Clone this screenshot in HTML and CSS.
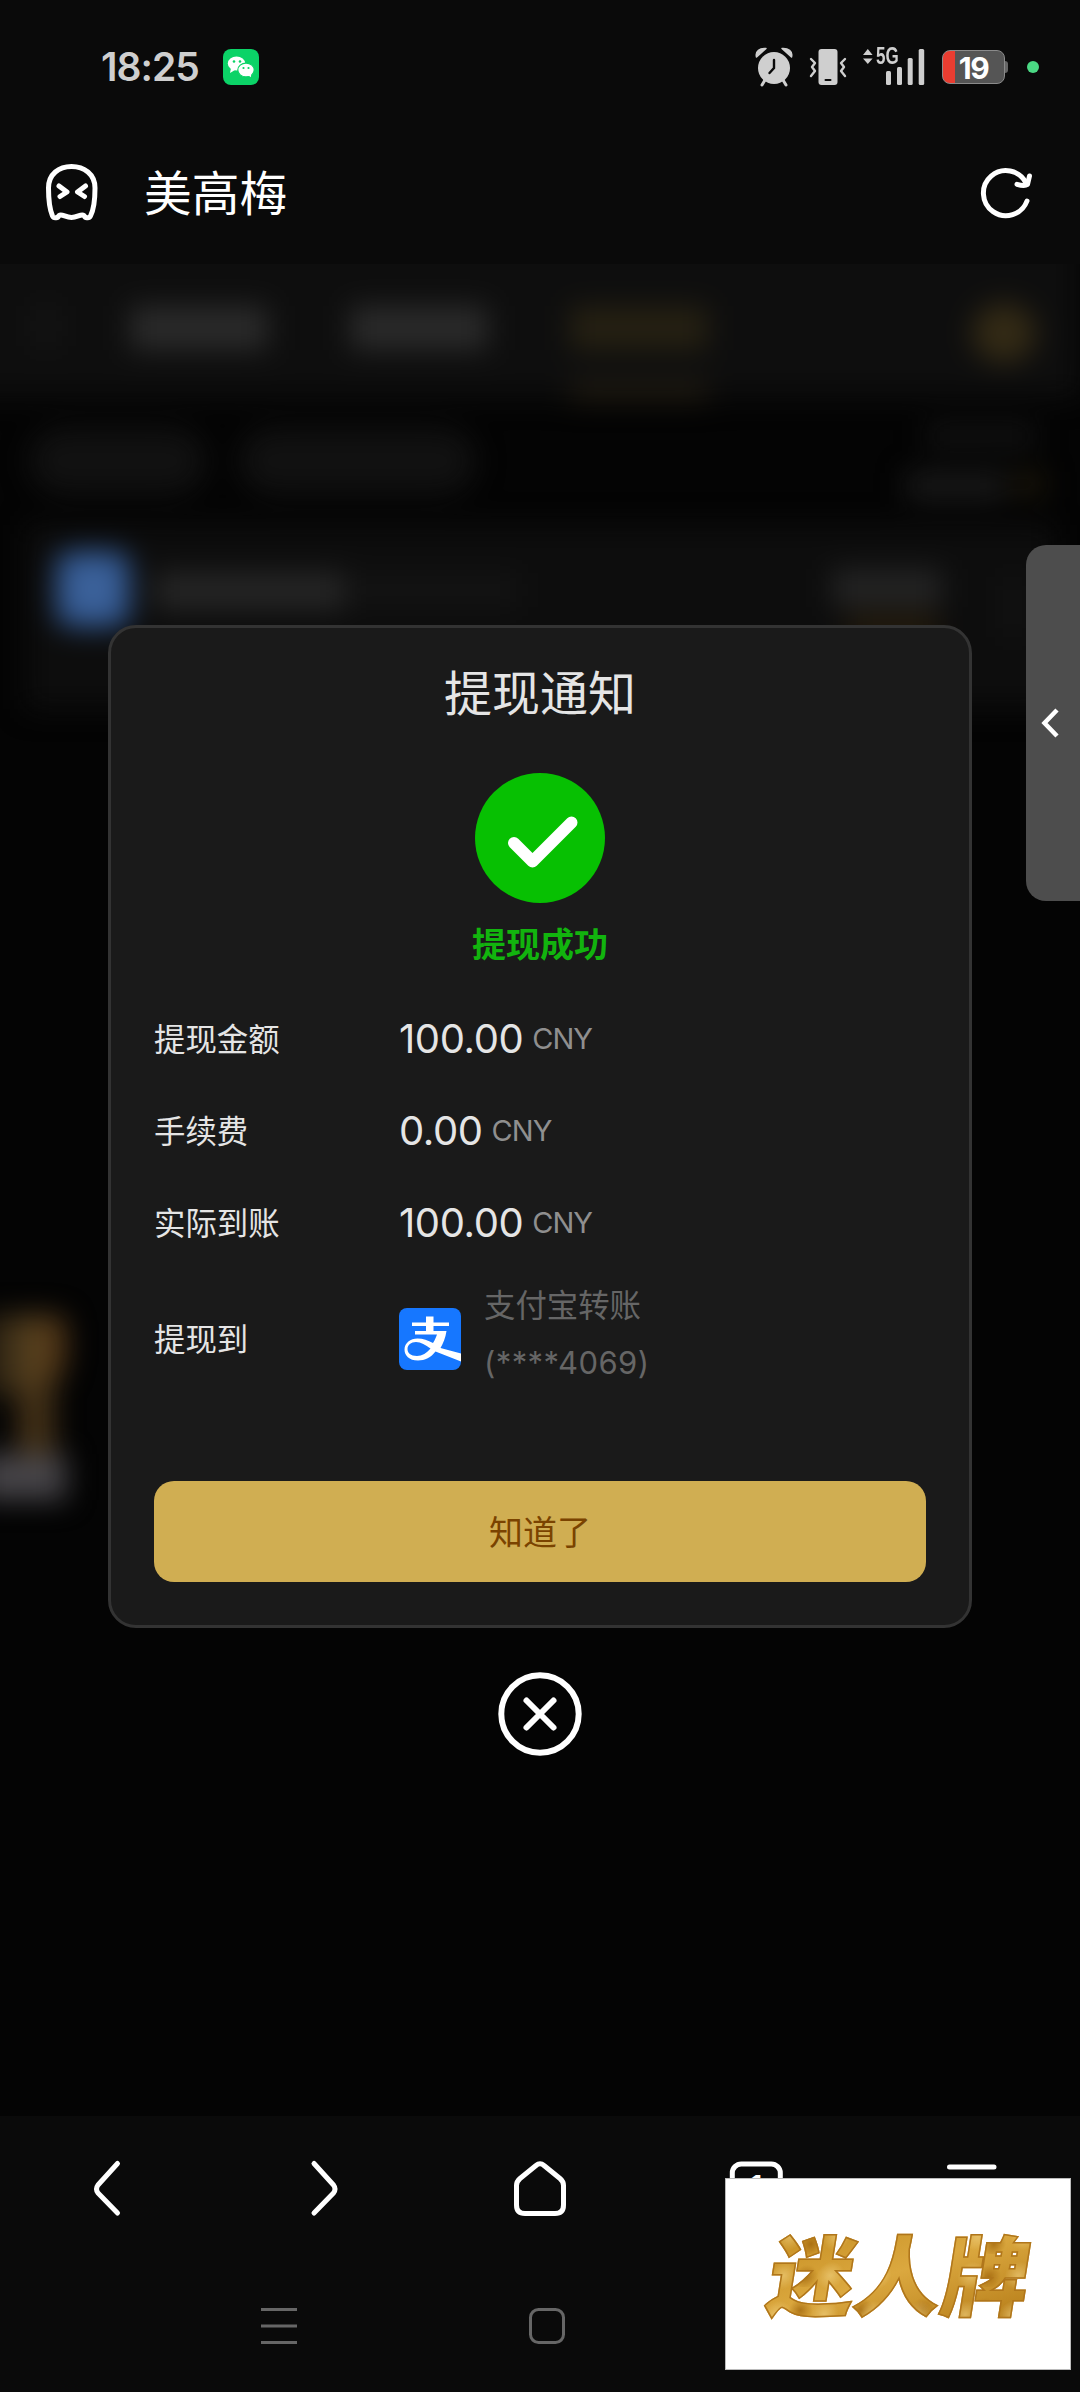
FILE: index.html
```html
<!DOCTYPE html>
<html lang="zh-CN">
<head>
<meta charset="utf-8">
<title>美高梅</title>
<link rel="stylesheet" href="styles.css">
</head>
<body>
<div class="phone">
  <header class="status">
    <span class="clock">18:25</span>
    <svg class="wechat" width="36" height="36" viewBox="0 0 36 36">
      <rect width="36" height="36" rx="8" fill="#0bd367"/>
      <ellipse cx="13.5" cy="14.5" rx="8.7" ry="7" fill="#fff"/><path d="M8 19l-1 5 5-3z" fill="#fff"/>
      <ellipse cx="23" cy="21" rx="8.2" ry="6.9" fill="#fff" stroke="#0bd367" stroke-width="1.2"/><path d="M25 26l3 2.300v-4z" fill="#fff"/>
      <g fill="#0bd367"><circle cx="11" cy="12.500" r="1.300"/><circle cx="17" cy="12.500" r="1.300"/><circle cx="20.500" cy="19" r="1.100"/><circle cx="25.500" cy="19" r="1.100"/></g>
    </svg>
    <div class="signals">
      <svg width="38" height="40" viewBox="0 0 38 40">
        <path d="M1.500 10C0 4 5 1 11 1.500z M36.500 10C38 4 33 1 27 1.500z" fill="#cfcfcf" stroke="#cfcfcf" stroke-width="1.500" stroke-linejoin="round"/>
        <circle cx="19" cy="21" r="16" fill="#cfcfcf"/>
        <path d="M10 33l-3 5M28 33l3 5" stroke="#cfcfcf" stroke-width="3" stroke-linecap="round"/>
        <path d="M19 13v8l-4.500 5" fill="none" stroke="#0a0a0a" stroke-width="2.400" stroke-linecap="round"/>
      </svg>
      <svg class="vibrate" width="38" height="36" viewBox="0 0 38 36">
        <rect x="9.500" width="19" height="36" rx="3" fill="#cfcfcf"/><rect x="15.500" y="30" width="7" height="2" rx="1" fill="#0a0a0a"/>
        <path d="M2 10l4 4-3 4 3 4-4 5M36 10l-4 4 3 4-3 4 4 5" fill="none" stroke="#cfcfcf" stroke-width="2.400" stroke-linecap="round" stroke-linejoin="round"/>
      </svg>
      <div class="cell">
        <svg width="62" height="38" viewBox="0 0 62 38">
          <path d="M0 7l4.800-6 4.800 6zM0 10.500l4.800 5.500 4.800-5.500z" fill="#cfcfcf"/>
          <g fill="#cfcfcf"><rect x="23" y="23" width="5" height="14" rx="1.500"/><rect x="34" y="19" width="5" height="18" rx="1.500"/><rect x="44.700" y="10" width="5" height="27" rx="1.500"/><rect x="55.700" y="1" width="5.500" height="36" rx="1.500"/></g>
        </svg>
        <span class="net">5G</span>
      </div>
      <div class="battery"><span>19</span></div>
      <i class="dot"></i>
    </div>
  </header>

  <div class="appbar">
    <svg width="54" height="58" viewBox="0 0 54 58" fill="none" stroke="#fff" stroke-width="5" stroke-linecap="round" stroke-linejoin="round">
      <path d="M3.500 25C3.500 11 14 3.500 26.500 3.500S50 11 50 25c0 10-1 21-4.500 28-1.500 3-5.500 2-6.500-.5-3-2-6.500 2-12.500 2s-9.500-4-12.500-2c-1 2.500-5 3.500-6.500.5C4.500 46 3.500 35 3.500 25Z"/>
      <path d="M14 23l8 6-7 4.500M40.500 23l-8 6 7 4.500" stroke-width="5"/>
    </svg>
    <h1>美高梅</h1>
    <svg class="reload" width="54" height="54" viewBox="0 0 54 54" fill="none" stroke="#fff" stroke-width="5" stroke-linecap="round" stroke-linejoin="round">
      <path d="M48 36A22.500 22.500 0 1 1 47 18"/><path d="M50.500 11l-2 8.500q-3 2-10.500-.2"/>
    </svg>
  </div>

  <main class="page">
    <div class="behind" aria-hidden="true">
      <div class="tabs">
        <i class="back"></i><i class="tab"></i><i class="tab"></i><i class="tab active"></i><i class="coin"></i>
      </div>
      <div class="filters">
        <i class="pill short"></i><i class="pill"></i>
        <div class="sums"><i></i><i class="wide"></i></div><i class="gold"></i>
      </div>
      <div class="record">
        <i class="logo"></i><i class="name"></i><i class="sub"></i>
        <div class="state"><i></i><i class="orange"></i></div><i class="arrow"></i>
      </div>
      <div class="trophy"><i class="cup"></i><i class="stem"></i><i class="base"></i></div>
    </div>

    <div class="handle">
      <svg width="18" height="30" viewBox="0 0 18 30" fill="none" stroke="#fff" stroke-width="4.500"><path d="M16 2L3.500 15 16 28"/></svg>
    </div>

    <section class="dialog">
      <h2>提现通知</h2>
      <svg class="ok" width="130" height="130" viewBox="0 0 130 130">
        <circle cx="65" cy="65" r="65" fill="#07c002"/>
        <path d="M39 70l18.500 18.500L96.500 49.500" fill="none" stroke="#fff" stroke-width="12" stroke-linecap="round" stroke-linejoin="round"/>
      </svg>
      <p class="result">提现成功</p>
      <dl class="rows">
        <div class="row"><dt>提现金额</dt><dd><b>100.00</b><small>CNY</small></dd></div>
        <div class="row"><dt>手续费</dt><dd><b>0.00</b><small>CNY</small></dd></div>
        <div class="row"><dt>实际到账</dt><dd><b>100.00</b><small>CNY</small></dd></div>
        <div class="row account"><dt>提现到</dt>
          <dd>
            <svg width="62" height="62" viewBox="0 0 62 62">
              <rect width="62" height="62" rx="8" fill="#1677ff"/>
              <path d="M27 8.500h7.500v6H50V18H34.500v5H47.500C46.500 30 44 35.500 41.500 40L62 45.500v8L36.500 43.500C32 49.500 26 52.500 19 52.500 10 52.500 5.500 47.500 5.500 41.500c0-6.500 6-11 13-11 5.500 0 10.500 2 15.500 4.500 2-3 3-6 4-8.500H16v-3.500h11v-5H13v-3.500h14zM31.500 40.500c-5-3.500-9.500-6.500-14.500-6.500-5 0-8.500 3-8.500 7s3 7 9.500 7c5 0 10-3 13.500-7.500z" fill="#fff" fill-rule="evenodd"/>
            </svg>
            <span>支付宝转账<br><em>(****4069)</em></span>
          </dd>
        </div>
      </dl>
      <button class="confirm">知道了</button>
    </section>
    <svg class="close" width="84" height="84" viewBox="0 0 84 84" fill="none" stroke="#fff" stroke-width="6" stroke-linecap="round">
      <circle cx="42" cy="42" r="38.700"/><path d="M28.500 28.500l27 27M55.500 28.500l-27 27"/>
    </svg>
  </main>

  <footer class="bottom">
    <nav class="browser">
      <svg width="54" height="58" viewBox="0 0 54 58"><path d="M36.500 4.500L17 26q-3 4 0 8L36.500 54"/></svg>
      <svg width="54" height="58" viewBox="0 0 54 58"><path d="M17 4.500l19.500 21.500q3 4 0 8L17 54"/></svg>
      <svg width="54" height="58" viewBox="0 0 54 58"><path d="M23 6.500q4-3.500 8 0L47 19.500q3.500 3 3.500 7V46q0 8.500-8.500 8.500H12q-8.500 0-8.500-8.500V26.500q0-4 3.500-7Z"/></svg>
      <div class="windows"><svg width="54" height="58" viewBox="0 0 54 58"><rect x="3.300" y="5" width="48" height="48" rx="9"/></svg><span>1</span></div>
      <svg width="54" height="58" viewBox="0 0 54 58"><path d="M4.500 8H49M4.500 29H49M4.500 49H49"/></svg>
    </nav>
    <nav class="system">
      <svg width="36" height="38" viewBox="0 0 36 38"><path d="M0 2.500h36M0 19h36M0 35.500h36"/></svg>
      <svg width="36" height="38" viewBox="0 0 36 38"><rect x="1.500" y="2.500" width="33" height="33" rx="8"/></svg>
    </nav>
    <div class="stamp"><span>迷人牌</span></div>
  </footer>
</div>
</body>
</html>
```
FILE: styles.css
```css
* { box-sizing: border-box; margin: 0; padding: 0; }
body { background: #040404; font-family: Inter, "Noto Sans CJK SC", sans-serif; color: #e5e5e5; }
svg { display: block; flex: none; }
.phone { width: 1080px; height: 2392px; display: flex; flex-direction: column; overflow: hidden; }

/* status bar */
.status { height: 134px; background: #0a0a0a; display: flex; align-items: center; padding-left: 101px; }
.clock { font: 600 39px/40px Inter, sans-serif; color: #cfcfcf; letter-spacing: -1px; width: 122px; white-space: nowrap; }
.signals { margin-left: auto; display: flex; align-items: center; padding-right: 41px; }
.vibrate { margin-left: 16px; }
.cell { position: relative; margin-left: 16px; margin-right: 1px; }
.net { position: absolute; left: 13px; top: -1px; font: 700 23px/18px "Liberation Sans", sans-serif; color: #cfcfcf; transform: scaleX(.74); transform-origin: 0 0; }
.battery { position: relative; width: 63px; height: 34px; margin-left: 16px; border: 1px solid #8b8b8b; border-radius: 8px; background: linear-gradient(90deg, #e93d31 12px, #555 12px); display: flex; justify-content: center; align-items: center; }
.battery span { font: 700 30px/32px Inter, sans-serif; color: #fff; letter-spacing: -1.500px; padding-top: 2px; }
.battery::after { content: ""; position: absolute; right: -4px; top: 10px; width: 3px; height: 12px; border-radius: 0 3px 3px 0; background: #666; }
.dot { width: 12px; height: 12px; border-radius: 50%; background: #4bd984; margin-left: 22px; }

/* title bar */
.appbar { height: 130px; background: #0a0a0a; display: flex; align-items: center; padding: 0 47px 14px 45px; }
.appbar h1 { margin: 0 0 2px 45px; font: 400 47.700px/60px "Noto Sans CJK SC", sans-serif; color: #fff; }
.appbar .reload { margin-left: auto; }

/* page with dimmed content */
.page { position: relative; height: 1852px; background: #040404; display: flex; flex-direction: column; align-items: center; padding-top: 361px; overflow: hidden; }
.behind { position: absolute; inset: -40px 0 0; filter: blur(14px); }
.behind i { display: block; flex: none; }
.tabs { height: 173px; background: #0e0e0e; display: flex; align-items: flex-start; margin: 0 0 0 -40px; padding: 82px 46px 0 76px; }
.tabs .back { width: 20px; height: 40px; background: #161616; margin-right: 74px; }
.tabs .tab { width: 138px; height: 44px; background: #2a2a2a; margin-right: 82px; }
.tabs .active { position: relative; background: #252012; margin: 0; }
.tabs .active::after { content: ""; position: absolute; top: 76px; left: 0; width: 100%; height: 18px; background: #221d12; }
.tabs .coin { width: 64px; height: 60px; border-radius: 50%; background: #332a15; margin: -3px -2px 0 auto; }
.filters { height: 128px; display: flex; align-items: center; padding: 0 30px; }
.pill { width: 235px; height: 66px; border-radius: 33px; background: #111; }
.pill.short { width: 175px; margin-right: 35px; }
.sums { margin-left: auto; display: grid; gap: 22px; justify-items: end; }
.sums i { width: 110px; height: 28px; background: #101010; margin-right: -26px; }
.sums .wide { width: 100px; background: #191919; margin: 0 4px 0 0; }
.filters .gold { width: 30px; height: 26px; background: #1a1509; align-self: end; margin: 0 6px 28px 4px; }
.record { height: 184px; margin: 0 26px; background: #0d0d0d; display: flex; align-items: flex-start; padding: 26px 20px 0 30px; }
.record .logo { width: 74px; height: 76px; background: radial-gradient(#42669c, #2a5390); border-radius: 16px; }
.record .name { width: 192px; height: 38px; background: #252525; margin: 21px 0 0 24px; }
.record .sub { width: 165px; height: 34px; background: #131313; margin: 22px 0 0 8px; }
.state { margin-left: auto; margin-top: 18px; display: grid; gap: 6px; }
.state i { width: 110px; height: 38px; background: #232323; }
.state .orange { width: 90px; background: #20180b; margin-left: 16px; }
.record .arrow { width: 14px; height: 60px; background: #151515; margin: 26px 14px 0 64px; }
.trophy { width: 90px; margin: 606px 0 0 -20px; }
.trophy .cup { width: 86px; height: 80px; background: linear-gradient(90deg, #2c2212 25%, #54401f 50%, #553716); border-radius: 0 12px 40px 0; }
.trophy .stem { width: 36px; height: 75px; background: #453218; margin: -12px 0 0 38px; }
.trophy .base { width: 86px; height: 46px; background: #464448; margin-top: -4px; }

.handle { position: absolute; right: 0; top: 281px; width: 54px; height: 356px; border-radius: 20px 0 0 20px; background: #4d4d4d; display: flex; align-items: center; padding-left: 15px; }

/* dialog */
.dialog { position: relative; width: 864px; height: 1003px; border: 3px solid #333; border-radius: 28px; background: #1a1a1a; display: flex; flex-direction: column; align-items: center; padding: 27px 43px 0; }
.dialog h2 { font: 400 48px/70px "Noto Sans CJK SC", sans-serif; color: #e5e5e5; }
.ok { margin-top: 48px; }
.result { margin-top: 15px; font: 700 34px/50px "Noto Sans CJK SC", sans-serif; color: #12b40e; }
.rows { width: 100%; margin-top: 25px; }
.row { height: 92px; display: flex; align-items: center; }
.row dt { width: 245px; font: 400 31.400px/46px "Noto Sans CJK SC", sans-serif; padding-bottom: 3px; }
.row dd { display: flex; align-items: center; gap: 9px; }
.row b { font: 400 40px/46px Inter, sans-serif; letter-spacing: -.4px; }
.row small { font: 400 29px/46px Inter, sans-serif; color: #8f8f8f; letter-spacing: -1px; }
.account { height: 140px; }
.account dd { gap: 23px; font: 400 31.400px/57px "Noto Sans CJK SC", sans-serif; color: #666; }
.account dd span { padding-bottom: 12px; }
.account em { font: 400 31px/57px Inter, sans-serif; letter-spacing: .4px; }
.confirm { margin-top: 72px; padding-bottom: 1px; width: 772px; height: 101px; flex: none; border: 0; border-radius: 20px; background: #d0ae52; font: 400 34px/50px "Noto Sans CJK SC", sans-serif; color: #7a4300; }
.close { position: relative; margin-top: 44px; }

/* bottom bars */
.bottom { position: relative; height: 276px; background: #0a0a0a; display: flex; flex-direction: column; padding-top: 43px; }
.browser { display: grid; grid-template-columns: repeat(5, 1fr); justify-items: center; }
.browser svg { fill: none; stroke: #fff; stroke-width: 5; stroke-linecap: round; stroke-linejoin: round; }
.windows { position: relative; }
.windows span { position: absolute; left: 0; width: 100%; top: 9px; text-align: center; font: 600 30px/36px Inter, sans-serif; color: #fff; }
.system { display: flex; gap: 232px; padding-left: 261px; margin-top: 90px; }
.system svg { fill: none; stroke: #666; stroke-width: 3; }
.stamp { position: absolute; left: 725px; top: 62px; width: 346px; height: 192px; background: #fff; border: 1px solid #bbb; display: flex; align-items: center; justify-content: center; }
.stamp span { font: 900 87px/100px "Noto Sans CJK SC", sans-serif; margin: 0 0 6px 4px; transform: skewX(-9deg); color: transparent; -webkit-text-stroke: 1.500px #b0761b; background: radial-gradient(circle at 30% 40%, #f2d38499 0, transparent 14px) 0 0 / 47px 39px, radial-gradient(circle at 60% 70%, #9a5f08aa 0, transparent 12px) 0 0 / 61px 33px, linear-gradient(160deg, #c48c1f, #dba83f 50%, #b57c18); -webkit-background-clip: text; background-clip: text; }
```
